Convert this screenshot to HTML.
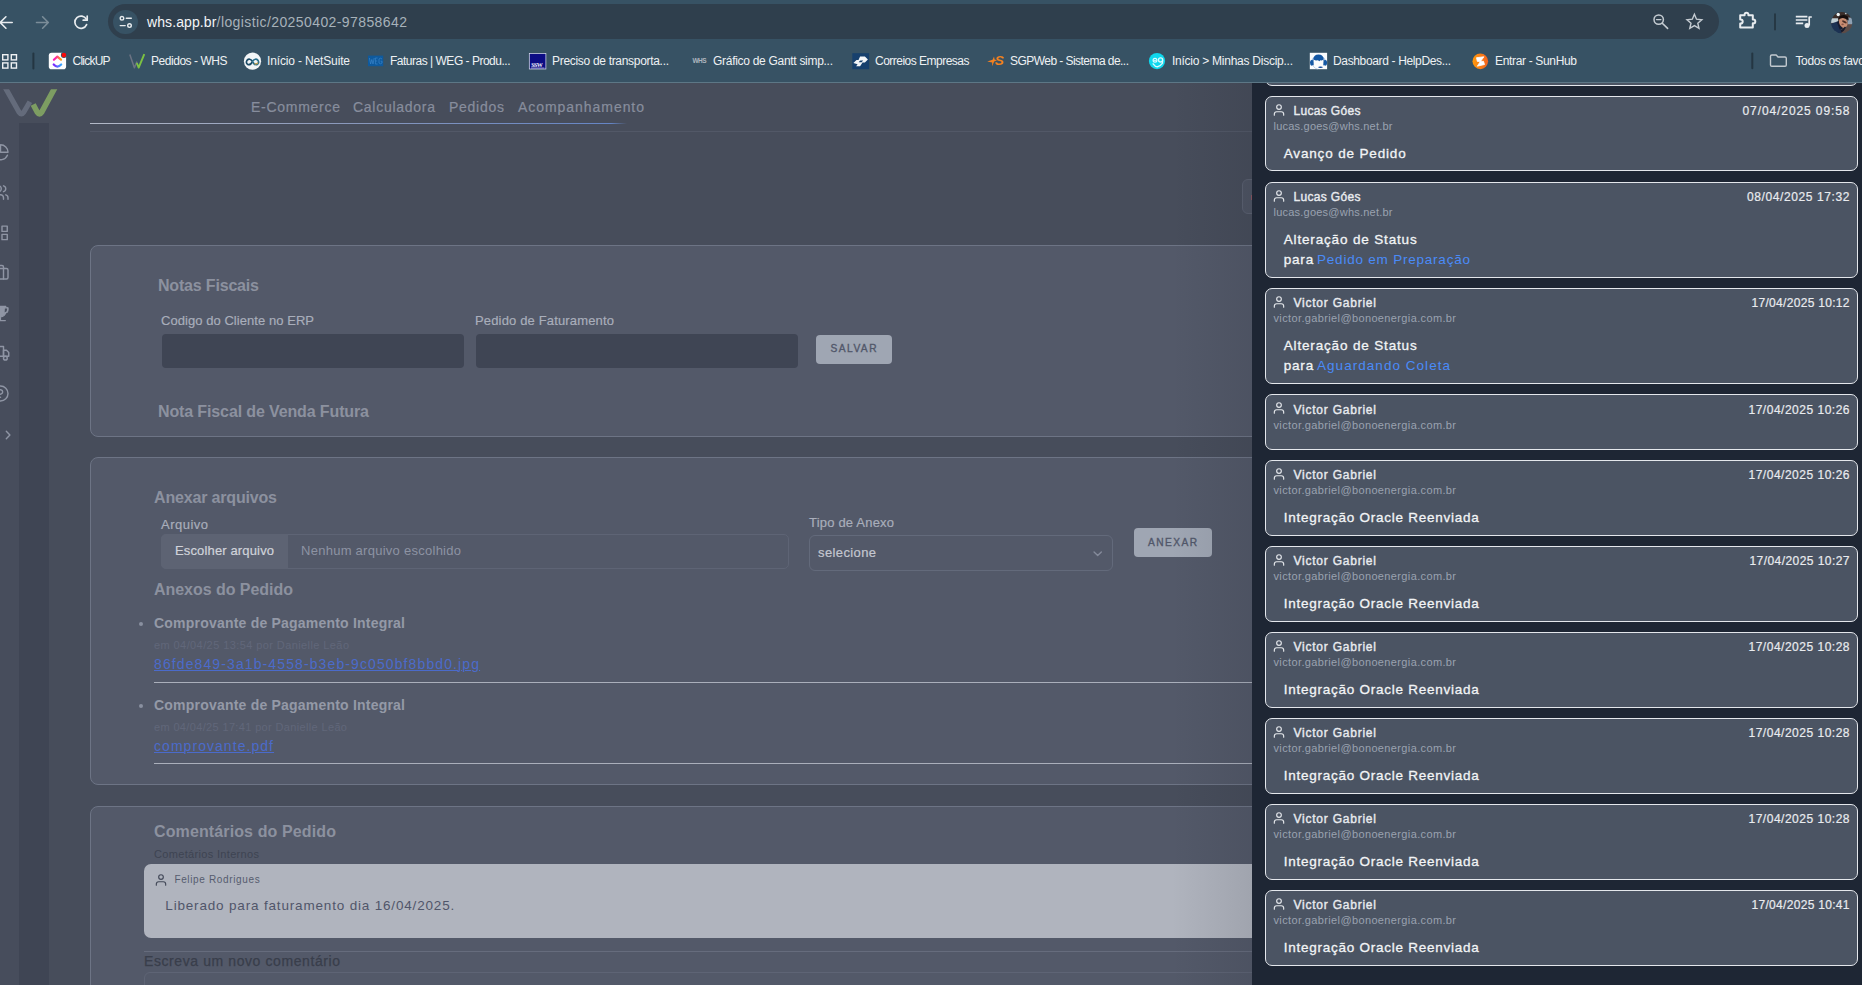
<!DOCTYPE html>
<html lang="pt-BR"><head><meta charset="utf-8"><title>WHS</title>
<style>
html,body{margin:0;padding:0}
body{width:1862px;height:985px;overflow:hidden;position:relative;background:#474d5b;font-family:"Liberation Sans",sans-serif;}
.t{position:absolute;white-space:pre;line-height:1;}
.a{position:absolute;}
.card{position:absolute;left:90px;width:1300px;background:#535969;border:1px solid #6d7485;border-radius:8px;box-sizing:border-box;}
.dc{position:absolute;left:1265px;width:593px;background:#4b5463;border:1px solid #e4e7ec;border-radius:7px;box-sizing:border-box;}
.btn{position:absolute;background:#9fa6b3;border-radius:4px;}
svg{position:absolute;overflow:visible}
</style></head><body>
<div class="a" style="left:0;top:83px;width:19px;height:902px;background:#474d5c"></div><div class="a" style="left:19px;top:123px;width:30px;height:862px;background:#3f4554"></div><div class="a" style="left:90px;top:131px;width:1162px;height:1px;background:#50566400;border-top:1px solid #525867"></div><div class="a" style="left:90px;top:123px;width:537px;height:1.4px;background:linear-gradient(90deg,#b3b9c7 0%,#8c9abb 45%,#6585c5 97%,rgba(102,134,198,0) 100%)"></div><svg class="a" style="left:0;top:83px" width="60" height="40" viewBox="0 83 60 40">
<defs><clipPath id="lc"><rect x="0" y="89.2" width="60" height="40"/></clipPath></defs>
<g clip-path="url(#lc)" fill="none" stroke-linejoin="round" stroke-linecap="butt">
<path d="M4.9 87 L19.1 112.3 Q21.4 115.6 23.7 112.3 L29.9 101.8" stroke="#646b7b" stroke-width="5.2"/>
<path d="M33.2 104.5 L37.3 112.2 Q39.5 115.6 41.7 112.2 L55.3 87" stroke="#7d9d62" stroke-width="5.6"/>
</g></svg><span class="t" style="top:99.55px;font-size:14px;color:#878d9d;letter-spacing:0.726px;left:251.00px;-webkit-text-stroke:0.2px #878d9d;">E-Commerce</span><span class="t" style="top:99.55px;font-size:14px;color:#878d9d;letter-spacing:0.728px;left:353.00px;-webkit-text-stroke:0.2px #878d9d;">Calculadora</span><span class="t" style="top:99.55px;font-size:14px;color:#878d9d;letter-spacing:0.734px;left:449.00px;-webkit-text-stroke:0.2px #878d9d;">Pedidos</span><span class="t" style="top:99.55px;font-size:14px;color:#878d9d;letter-spacing:0.951px;left:518.00px;-webkit-text-stroke:0.2px #878d9d;">Acompanhamento</span><svg class="a" style="left:0;top:83px" width="19" height="902" viewBox="0 83 19 902" fill="none" stroke="#8f95a4" stroke-linecap="round" stroke-linejoin="round"><g transform="translate(-8.5 143.3) scale(0.75)" stroke-width="1.9"><path d="M21.21 15.89A10 10 0 1 1 8 2.83"/><path d="M22 12A10 10 0 0 0 12 2v10z"/></g><g transform="translate(-8.5 183.5) scale(0.75)" stroke-width="1.9"><path d="M16 21v-2a4 4 0 0 0-4-4H6a4 4 0 0 0-4 4v2"/><circle cx="9" cy="7" r="4"/><path d="M22 21v-2a4 4 0 0 0-3-3.87"/><path d="M16 3.13a4 4 0 0 1 0 7.75"/></g><g transform="translate(-8.5 223.9) scale(0.75)" stroke-width="1.9"><rect x="14" y="3" width="7" height="7"/><rect x="14" y="14" width="7" height="7"/><rect x="3" y="3" width="7" height="7"/><rect x="3" y="14" width="7" height="7"/></g><g transform="translate(-8.5 263.3) scale(0.75)" stroke-width="1.9"><rect x="2" y="7" width="20" height="14" rx="2"/><path d="M16 21V5a2 2 0 0 0-2-2h-4a2 2 0 0 0-2 2v16"/></g><g transform="translate(-8.5 304.1) scale(0.75)" stroke-width="1.9"><path d="M5 3h14v7a7 7 0 0 1-14 0z M12 16v5 M6 22h12.5 M19 5h3v2.5a4 4 0 0 1-4 4" fill="#8f95a4" stroke-width="1.6"/><path d="M18 5h3.5v2.5a4 4 0 0 1-4 4" fill="#474d5c" stroke-width="1.5"/></g><g transform="translate(-8.5 344.3) scale(0.75)" stroke-width="1.9"><rect x="1" y="3" width="15" height="13"/><polygon points="16 8 20 8 23 11 23 16 16 16 16 8"/><circle cx="5.5" cy="18.5" r="2.5"/><circle cx="18.5" cy="18.5" r="2.5" fill="#474d5c"/></g><g transform="translate(-8.5 384.5) scale(0.75)" stroke-width="1.9"><circle cx="12" cy="12" r="10"/><path d="M9.09 9a3 3 0 0 1 5.83 1c0 2-3 3-3 3"/><path d="M12 17h.01"/></g><path d="M6.3 431.2 L9.9 435 L6.3 438.8" stroke-width="1.4"/></svg><div class="card" style="top:245px;height:192px"></div><span class="t" style="top:277.56px;font-size:16px;color:#8c919f;font-weight:700;letter-spacing:-0.180px;left:158.00px;">Notas Fiscais</span><span class="t" style="top:314.00px;font-size:13px;color:#a9aebb;letter-spacing:0.054px;left:161.00px;-webkit-text-stroke:0.18px #a9aebb;">Codigo do Cliente no ERP</span><span class="t" style="top:314.00px;font-size:13px;color:#a9aebb;letter-spacing:0.156px;left:475.00px;-webkit-text-stroke:0.18px #a9aebb;">Pedido de Faturamento</span><div class="a" style="left:162px;top:334px;width:302px;height:34px;background:#3f4554;border-radius:4px"></div><div class="a" style="left:476px;top:334px;width:322px;height:34px;background:#3f4554;border-radius:4px"></div><div class="btn" style="left:816px;top:335px;width:76px;height:29px"></div><span class="t" style="top:343.97px;font-size:10.2px;color:#51576a;letter-spacing:1.459px;left:830.50px;-webkit-text-stroke:0.35px #51576a;">SALVAR</span><span class="t" style="top:403.56px;font-size:16px;color:#8c919f;font-weight:700;letter-spacing:-0.126px;left:158.00px;">Nota Fiscal de Venda Futura</span><div class="card" style="top:457px;height:328px"></div><span class="t" style="top:489.56px;font-size:16px;color:#8c919f;font-weight:700;letter-spacing:-0.171px;left:154.00px;">Anexar arquivos</span><span class="t" style="top:518.00px;font-size:13px;color:#a9aebb;letter-spacing:0.487px;left:161.00px;-webkit-text-stroke:0.18px #a9aebb;">Arquivo</span><div class="a" style="left:161px;top:534px;width:628px;height:35px;border:1px solid #5e6475;border-radius:5px;box-sizing:border-box"></div><div class="a" style="left:161px;top:534px;width:127px;height:35px;background:#5d6373;border-radius:5px 0 0 5px"></div><span class="t" style="top:544.00px;font-size:13px;color:#d0d3da;letter-spacing:0.145px;left:175.00px;-webkit-text-stroke:0.2px #d0d3da;">Escolher arquivo</span><span class="t" style="top:544.00px;font-size:13px;color:#8d93a3;letter-spacing:0.264px;left:301.00px;">Nenhum arquivo escolhido</span><span class="t" style="top:515.60px;font-size:13px;color:#a9aebb;letter-spacing:0.197px;left:809.00px;-webkit-text-stroke:0.18px #a9aebb;">Tipo de Anexo</span><div class="a" style="left:809px;top:535px;width:304px;height:36px;border:1px solid #636a7b;border-radius:6px;box-sizing:border-box"></div><span class="t" style="top:546.00px;font-size:13px;color:#c4c7d0;letter-spacing:0.383px;left:818.00px;-webkit-text-stroke:0.2px #c4c7d0;">selecione</span><svg class="a" style="left:1092.6px;top:550.6px" width="9.4" height="6.4" viewBox="0 0 10 7" fill="none" stroke="#858b9b" stroke-width="1.5" stroke-linecap="round" stroke-linejoin="round"><path d="M1 1 L5 5 L9 1"/></svg><div class="btn" style="left:1134px;top:528px;width:78px;height:29px"></div><span class="t" style="top:537.97px;font-size:10.2px;color:#51576a;letter-spacing:1.419px;left:1148.00px;-webkit-text-stroke:0.35px #51576a;">ANEXAR</span><span class="t" style="top:581.56px;font-size:16px;color:#8c919f;font-weight:700;letter-spacing:-0.039px;left:154.00px;">Anexos do Pedido</span><div class="a" style="left:138.6px;top:622.2px;width:4px;height:4px;border-radius:50%;background:#8a90a0"></div><span class="t" style="top:616.15px;font-size:14px;color:#9499a7;font-weight:700;letter-spacing:0.210px;left:154.00px;">Comprovante de Pagamento Integral</span><span class="t" style="top:640.09px;font-size:11px;color:#61677a;letter-spacing:0.411px;left:154.00px;">em 04/04/25 13:54 por Danielle Leão</span><span class="t" style="top:656.75px;font-size:14px;color:#4b6bcb;letter-spacing:1.107px;left:154.00px;text-decoration:underline;text-decoration-thickness:1px;text-underline-offset:1.2px;">86fde849-3a1b-4558-b3eb-9c050bf8bbd0.jpg</span><div class="a" style="left:154px;top:682px;width:1098px;height:1px;background:#aaafbb"></div><div class="a" style="left:138.6px;top:704.0px;width:4px;height:4px;border-radius:50%;background:#8a90a0"></div><span class="t" style="top:697.95px;font-size:14px;color:#9499a7;font-weight:700;letter-spacing:0.210px;left:154.00px;">Comprovante de Pagamento Integral</span><span class="t" style="top:721.89px;font-size:11px;color:#61677a;letter-spacing:0.352px;left:154.00px;">em 04/04/25 17:41 por Danielle Leão</span><span class="t" style="top:738.55px;font-size:14px;color:#4b6bcb;letter-spacing:1.050px;left:154.00px;text-decoration:underline;text-decoration-thickness:1px;text-underline-offset:1.2px;">comprovante.pdf</span><div class="a" style="left:154px;top:763px;width:1098px;height:1px;background:#aaafbb"></div><div class="card" style="top:806px;height:300px"></div><span class="t" style="top:824.46px;font-size:16px;color:#8c919f;font-weight:700;letter-spacing:0.121px;left:154.00px;">Comentários do Pedido</span><span class="t" style="top:848.69px;font-size:11px;color:#3e4452;letter-spacing:0.331px;left:154.00px;">Cometários Internos</span><div class="a" style="left:144px;top:864px;width:1200px;height:74px;background:#b0b4be;border-radius:7px"></div><svg class="a" style="left:153.7px;top:872.8px" width="14" height="14" viewBox="0 0 24 24" fill="none" stroke="#434959" stroke-width="2" stroke-linecap="round" stroke-linejoin="round"><path d="M20 21v-2a4 4 0 0 0-4-4H8a4 4 0 0 0-4 4v2"/><circle cx="12" cy="7" r="4"/></svg><span class="t" style="top:875.43px;font-size:10px;color:#565c6e;letter-spacing:0.646px;left:174.40px;">Felipe Rodrigues</span><span class="t" style="top:899.37px;font-size:13.5px;color:#50566a;letter-spacing:0.826px;left:165.30px;">Liberado para faturamento dia 16/04/2025.</span><div class="a" style="left:144px;top:951px;width:1108px;height:1px;background:#666c7d"></div><span class="t" style="top:954.15px;font-size:14px;color:#393e4b;letter-spacing:0.588px;left:144.00px;-webkit-text-stroke:0.25px #393e4b;">Escreva um novo comentário</span><div class="a" style="left:144px;top:972px;width:1200px;height:40px;border:1px solid #5e6475;border-radius:6px;box-sizing:border-box"></div><div class="a" style="left:1242px;top:179px;width:30px;height:35px;background:#4e5463;border:1px solid #5b6171;border-radius:6px;box-sizing:border-box"></div><div class="a" style="left:1250.6px;top:195px;width:1.4px;height:5px;background:#8a5560"></div><div class="a" style="left:1172px;top:83px;width:80px;height:902px;background:linear-gradient(90deg,rgba(20,24,34,0),rgba(20,24,34,0.10))"></div><div class="a" style="left:1252px;top:83px;width:610px;height:902px;background:#1e2634"></div><div class="dc" style="top:10px;height:76px"></div><div class="dc" style="top:96px;height:75px"><svg class="a" style="left:6.45px;top:5.5px" width="14" height="14" viewBox="0 0 24 24" fill="none" stroke="#e3e6ea" stroke-width="2" stroke-linecap="round" stroke-linejoin="round"><path d="M20 21v-2a4 4 0 0 0-4-4H8a4 4 0 0 0-4 4v2"/><circle cx="12" cy="7" r="4"/></svg></div><span class="t" style="top:105.04px;font-size:12px;color:#e9ebef;letter-spacing:0.328px;left:1293.50px;-webkit-text-stroke:0.38px #e9ebef;">Lucas Góes</span><span class="t" style="top:121.29px;font-size:11px;color:#9aa2b0;letter-spacing:0.224px;left:1273.50px;">lucas.goes@whs.net.br</span><span class="t" style="top:105.04px;font-size:12px;color:#e9ebef;letter-spacing:0.905px;right:11.59px;-webkit-text-stroke:0.2px #e9ebef;">07/04/2025 09:58</span><span class="t" style="top:146.57px;font-size:13.5px;color:#f2f4f6;letter-spacing:0.844px;left:1283.70px;-webkit-text-stroke:0.3px #f2f4f6;">Avanço de Pedido</span><div class="dc" style="top:182px;height:96px"><svg class="a" style="left:6.45px;top:5.5px" width="14" height="14" viewBox="0 0 24 24" fill="none" stroke="#e3e6ea" stroke-width="2" stroke-linecap="round" stroke-linejoin="round"><path d="M20 21v-2a4 4 0 0 0-4-4H8a4 4 0 0 0-4 4v2"/><circle cx="12" cy="7" r="4"/></svg></div><span class="t" style="top:191.04px;font-size:12px;color:#e9ebef;letter-spacing:0.328px;left:1293.50px;-webkit-text-stroke:0.38px #e9ebef;">Lucas Góes</span><span class="t" style="top:207.29px;font-size:11px;color:#9aa2b0;letter-spacing:0.224px;left:1273.50px;">lucas.goes@whs.net.br</span><span class="t" style="top:191.04px;font-size:12px;color:#e9ebef;letter-spacing:0.605px;right:11.89px;-webkit-text-stroke:0.2px #e9ebef;">08/04/2025 17:32</span><span class="t" style="top:232.57px;font-size:13.5px;color:#f2f4f6;letter-spacing:0.843px;left:1283.70px;-webkit-text-stroke:0.3px #f2f4f6;">Alteração de Status</span><span class="t" style="top:252.57px;font-size:13.5px;color:#f2f4f6;letter-spacing:0.823px;left:1283.70px;-webkit-text-stroke:0.3px #f2f4f6;">para</span><span class="t" style="top:252.57px;font-size:13.5px;color:#4a8bf8;letter-spacing:0.785px;left:1317.00px;">Pedido em Preparação</span><div class="dc" style="top:288px;height:96px"><svg class="a" style="left:6.45px;top:5.5px" width="14" height="14" viewBox="0 0 24 24" fill="none" stroke="#e3e6ea" stroke-width="2" stroke-linecap="round" stroke-linejoin="round"><path d="M20 21v-2a4 4 0 0 0-4-4H8a4 4 0 0 0-4 4v2"/><circle cx="12" cy="7" r="4"/></svg></div><span class="t" style="top:297.04px;font-size:12px;color:#e9ebef;letter-spacing:0.770px;left:1293.50px;-webkit-text-stroke:0.38px #e9ebef;">Victor Gabriel</span><span class="t" style="top:313.29px;font-size:11px;color:#9aa2b0;letter-spacing:0.367px;left:1273.50px;">victor.gabriel@bonoenergia.com.br</span><span class="t" style="top:297.04px;font-size:12px;color:#e9ebef;letter-spacing:0.305px;right:12.19px;-webkit-text-stroke:0.2px #e9ebef;">17/04/2025 10:12</span><span class="t" style="top:338.57px;font-size:13.5px;color:#f2f4f6;letter-spacing:0.843px;left:1283.70px;-webkit-text-stroke:0.3px #f2f4f6;">Alteração de Status</span><span class="t" style="top:358.57px;font-size:13.5px;color:#f2f4f6;letter-spacing:0.823px;left:1283.70px;-webkit-text-stroke:0.3px #f2f4f6;">para</span><span class="t" style="top:358.57px;font-size:13.5px;color:#4a8bf8;letter-spacing:1.041px;left:1317.00px;">Aguardando Coleta</span><div class="dc" style="top:394px;height:56px"><svg class="a" style="left:6.45px;top:6.3px" width="14" height="14" viewBox="0 0 24 24" fill="none" stroke="#e3e6ea" stroke-width="2" stroke-linecap="round" stroke-linejoin="round"><path d="M20 21v-2a4 4 0 0 0-4-4H8a4 4 0 0 0-4 4v2"/><circle cx="12" cy="7" r="4"/></svg></div><span class="t" style="top:404.04px;font-size:12px;color:#e9ebef;letter-spacing:0.770px;left:1293.50px;-webkit-text-stroke:0.38px #e9ebef;">Victor Gabriel</span><span class="t" style="top:420.29px;font-size:11px;color:#9aa2b0;letter-spacing:0.367px;left:1273.50px;">victor.gabriel@bonoenergia.com.br</span><span class="t" style="top:404.04px;font-size:12px;color:#e9ebef;letter-spacing:0.505px;right:11.99px;-webkit-text-stroke:0.2px #e9ebef;">17/04/2025 10:26</span><div class="dc" style="top:460px;height:76px"><svg class="a" style="left:6.45px;top:5.5px" width="14" height="14" viewBox="0 0 24 24" fill="none" stroke="#e3e6ea" stroke-width="2" stroke-linecap="round" stroke-linejoin="round"><path d="M20 21v-2a4 4 0 0 0-4-4H8a4 4 0 0 0-4 4v2"/><circle cx="12" cy="7" r="4"/></svg></div><span class="t" style="top:469.04px;font-size:12px;color:#e9ebef;letter-spacing:0.770px;left:1293.50px;-webkit-text-stroke:0.38px #e9ebef;">Victor Gabriel</span><span class="t" style="top:485.29px;font-size:11px;color:#9aa2b0;letter-spacing:0.367px;left:1273.50px;">victor.gabriel@bonoenergia.com.br</span><span class="t" style="top:469.04px;font-size:12px;color:#e9ebef;letter-spacing:0.505px;right:11.99px;-webkit-text-stroke:0.2px #e9ebef;">17/04/2025 10:26</span><span class="t" style="top:510.57px;font-size:13.5px;color:#f2f4f6;letter-spacing:0.746px;left:1283.70px;-webkit-text-stroke:0.3px #f2f4f6;">Integração Oracle Reenviada</span><div class="dc" style="top:546px;height:76px"><svg class="a" style="left:6.45px;top:5.5px" width="14" height="14" viewBox="0 0 24 24" fill="none" stroke="#e3e6ea" stroke-width="2" stroke-linecap="round" stroke-linejoin="round"><path d="M20 21v-2a4 4 0 0 0-4-4H8a4 4 0 0 0-4 4v2"/><circle cx="12" cy="7" r="4"/></svg></div><span class="t" style="top:555.04px;font-size:12px;color:#e9ebef;letter-spacing:0.770px;left:1293.50px;-webkit-text-stroke:0.38px #e9ebef;">Victor Gabriel</span><span class="t" style="top:571.29px;font-size:11px;color:#9aa2b0;letter-spacing:0.367px;left:1273.50px;">victor.gabriel@bonoenergia.com.br</span><span class="t" style="top:555.04px;font-size:12px;color:#e9ebef;letter-spacing:0.439px;right:12.06px;-webkit-text-stroke:0.2px #e9ebef;">17/04/2025 10:27</span><span class="t" style="top:596.57px;font-size:13.5px;color:#f2f4f6;letter-spacing:0.746px;left:1283.70px;-webkit-text-stroke:0.3px #f2f4f6;">Integração Oracle Reenviada</span><div class="dc" style="top:632px;height:76px"><svg class="a" style="left:6.45px;top:5.5px" width="14" height="14" viewBox="0 0 24 24" fill="none" stroke="#e3e6ea" stroke-width="2" stroke-linecap="round" stroke-linejoin="round"><path d="M20 21v-2a4 4 0 0 0-4-4H8a4 4 0 0 0-4 4v2"/><circle cx="12" cy="7" r="4"/></svg></div><span class="t" style="top:641.04px;font-size:12px;color:#e9ebef;letter-spacing:0.770px;left:1293.50px;-webkit-text-stroke:0.38px #e9ebef;">Victor Gabriel</span><span class="t" style="top:657.29px;font-size:11px;color:#9aa2b0;letter-spacing:0.367px;left:1273.50px;">victor.gabriel@bonoenergia.com.br</span><span class="t" style="top:641.04px;font-size:12px;color:#e9ebef;letter-spacing:0.505px;right:11.99px;-webkit-text-stroke:0.2px #e9ebef;">17/04/2025 10:28</span><span class="t" style="top:682.57px;font-size:13.5px;color:#f2f4f6;letter-spacing:0.746px;left:1283.70px;-webkit-text-stroke:0.3px #f2f4f6;">Integração Oracle Reenviada</span><div class="dc" style="top:718px;height:76px"><svg class="a" style="left:6.45px;top:5.5px" width="14" height="14" viewBox="0 0 24 24" fill="none" stroke="#e3e6ea" stroke-width="2" stroke-linecap="round" stroke-linejoin="round"><path d="M20 21v-2a4 4 0 0 0-4-4H8a4 4 0 0 0-4 4v2"/><circle cx="12" cy="7" r="4"/></svg></div><span class="t" style="top:727.04px;font-size:12px;color:#e9ebef;letter-spacing:0.770px;left:1293.50px;-webkit-text-stroke:0.38px #e9ebef;">Victor Gabriel</span><span class="t" style="top:743.29px;font-size:11px;color:#9aa2b0;letter-spacing:0.367px;left:1273.50px;">victor.gabriel@bonoenergia.com.br</span><span class="t" style="top:727.04px;font-size:12px;color:#e9ebef;letter-spacing:0.505px;right:11.99px;-webkit-text-stroke:0.2px #e9ebef;">17/04/2025 10:28</span><span class="t" style="top:768.57px;font-size:13.5px;color:#f2f4f6;letter-spacing:0.746px;left:1283.70px;-webkit-text-stroke:0.3px #f2f4f6;">Integração Oracle Reenviada</span><div class="dc" style="top:804px;height:76px"><svg class="a" style="left:6.45px;top:5.5px" width="14" height="14" viewBox="0 0 24 24" fill="none" stroke="#e3e6ea" stroke-width="2" stroke-linecap="round" stroke-linejoin="round"><path d="M20 21v-2a4 4 0 0 0-4-4H8a4 4 0 0 0-4 4v2"/><circle cx="12" cy="7" r="4"/></svg></div><span class="t" style="top:813.04px;font-size:12px;color:#e9ebef;letter-spacing:0.770px;left:1293.50px;-webkit-text-stroke:0.38px #e9ebef;">Victor Gabriel</span><span class="t" style="top:829.29px;font-size:11px;color:#9aa2b0;letter-spacing:0.367px;left:1273.50px;">victor.gabriel@bonoenergia.com.br</span><span class="t" style="top:813.04px;font-size:12px;color:#e9ebef;letter-spacing:0.505px;right:11.99px;-webkit-text-stroke:0.2px #e9ebef;">17/04/2025 10:28</span><span class="t" style="top:854.57px;font-size:13.5px;color:#f2f4f6;letter-spacing:0.746px;left:1283.70px;-webkit-text-stroke:0.3px #f2f4f6;">Integração Oracle Reenviada</span><div class="dc" style="top:890px;height:76px"><svg class="a" style="left:6.45px;top:5.5px" width="14" height="14" viewBox="0 0 24 24" fill="none" stroke="#e3e6ea" stroke-width="2" stroke-linecap="round" stroke-linejoin="round"><path d="M20 21v-2a4 4 0 0 0-4-4H8a4 4 0 0 0-4 4v2"/><circle cx="12" cy="7" r="4"/></svg></div><span class="t" style="top:899.04px;font-size:12px;color:#e9ebef;letter-spacing:0.770px;left:1293.50px;-webkit-text-stroke:0.38px #e9ebef;">Victor Gabriel</span><span class="t" style="top:915.29px;font-size:11px;color:#9aa2b0;letter-spacing:0.367px;left:1273.50px;">victor.gabriel@bonoenergia.com.br</span><span class="t" style="top:899.04px;font-size:12px;color:#e9ebef;letter-spacing:0.305px;right:12.19px;-webkit-text-stroke:0.2px #e9ebef;">17/04/2025 10:41</span><span class="t" style="top:940.57px;font-size:13.5px;color:#f2f4f6;letter-spacing:0.746px;left:1283.70px;-webkit-text-stroke:0.3px #f2f4f6;">Integração Oracle Reenviada</span><div class="a" style="left:0;top:0;width:1862px;height:82px;background:#375264"></div><div class="a" style="left:0;top:82px;width:1862px;height:1px;background:#5d7786"></div><div class="a" style="left:108px;top:4px;width:1611px;height:35px;border-radius:17.5px;background:#2f3f4d"></div><div class="a" style="left:113.3px;top:9.5px;width:24.8px;height:24.8px;border-radius:50%;background:#375264"></div><svg class="a" style="left:0;top:0" width="1862" height="82" viewBox="0 0 1862 82" fill="none" stroke="#e8ecef" stroke-width="1.5" stroke-linecap="round" stroke-linejoin="round">
<path d="M12.2 22.5 H0.2 M5.9 16.8 L0.2 22.5 L5.9 28.2" stroke-width="1.6"/>
<path d="M36.5 22.5 H48.3 M42.6 16.8 L48.3 22.5 L42.6 28.2" stroke="#7b8d99" stroke-width="1.6"/>
<path d="M86.3 19.2 A6.1 6.1 0 1 0 86.6 24.6" stroke-width="1.7"/><path d="M87.2 16.2 V20.2 H83.2" stroke-width="1.7"/>
<circle cx="122" cy="18.3" r="1.8" stroke-width="1.4"/><path d="M126.3 18.3 H131.3" stroke-width="1.4"/><circle cx="129.5" cy="25.6" r="1.8" stroke-width="1.4"/><path d="M120.2 25.6 H125.2" stroke-width="1.4"/>
<g stroke="#c5ccd2"><circle cx="1658.7" cy="19.6" r="4.7" stroke-width="1.5"/><path d="M1662.3 23.2 L1667.6 28.4" stroke-width="1.6"/><path d="M1656.5 19.6 H1660.9" stroke-width="1.4"/>
<path d="M1694.4 14.3 L1696.5 19.2 L1701.8 19.7 L1697.8 23.2 L1699 28.4 L1694.4 25.6 L1689.8 28.4 L1691 23.2 L1687 19.7 L1692.3 19.2 Z" stroke-width="1.4" stroke-linejoin="miter"/></g>
<path d="M1740.2 15.2 H1744.6 V14.6 A1.9 1.9 0 0 1 1748.4 14.6 V15.2 H1752.8 V19.5 H1753.4 A1.9 1.9 0 0 1 1753.4 23.3 H1752.8 V27.6 H1740.2 V23.6 H1740.6 A2 2 0 0 0 1740.6 19.4 H1740.2 Z" stroke-width="2"/>
<path d="M1775 14.2 V29.6" stroke="#263844" stroke-width="2"/>
<path d="M1795.8 16.6 H1807.4 M1795.8 20 H1807.4 M1795.8 23.4 H1803.2" stroke-width="1.7" stroke-linecap="butt"/><path d="M1809.2 25.4 V17 H1811.8" stroke-width="1.7" stroke-linecap="butt"/><circle cx="1807" cy="25.4" r="2.5" fill="#e8ecef" stroke="none"/>
</svg><svg class="a" style="left:1830.8px;top:11.7px" width="21.4" height="21.4" viewBox="0 0 21.4 21.4"><defs><clipPath id="av"><circle cx="10.7" cy="10.7" r="10.6"/></clipPath><filter id="avb" x="-10%" y="-10%" width="120%" height="120%"><feGaussianBlur stdDeviation="0.55"/></filter></defs><g clip-path="url(#av)"><g filter="url(#avb)"><rect x="-2" y="-2" width="26" height="26" fill="#5c4b47"/><rect x="-2" y="-2" width="26" height="8.5" fill="#3b2d2b"/><rect x="-1" y="6.3" width="8" height="4.6" fill="#bfcfd5"/><rect x="16.6" y="5.6" width="6" height="6.6" fill="#8fa1b3"/><circle cx="7.2" cy="2.5" r="1.7" fill="#eef5f5"/><circle cx="14.8" cy="1.4" r="0.9" fill="#b9c4c8"/><path d="M-1 12 L6.4 9.4 L10.4 15 L10.6 23 L-1 23 Z" fill="#1f3052"/><path d="M5.8 9.8 L9.4 8.4 L11.8 16.8 L8.6 17.4 Z" fill="#131c30"/><ellipse cx="12.3" cy="10.6" rx="4.1" ry="5.3" transform="rotate(-24 12.3 10.6)" fill="#c88d72"/><ellipse cx="13.4" cy="9.9" rx="2.6" ry="0.9" transform="rotate(28 13.4 9.9)" fill="#4a2f28"/><ellipse cx="11.6" cy="12.4" rx="1.2" ry="0.8" fill="#8a5446"/><path d="M7.4 6.6 Q8.6 2.6 13.4 3 Q18.2 3.8 17.6 8.6 Q14.4 5.6 10.6 6.2 Q8.6 6.6 7.4 7.8 Z" fill="#15110f"/><path d="M9.8 18.4 Q12 17 14 14.4 L15 15.4 Q13 19 10.6 20.6 Z" fill="#141a2a"/></g></g></svg><span class="t" style="top:14.55px;font-size:14px;color:#f3f5f7;letter-spacing:0.091px;left:147.00px;">whs.app.br</span><span class="t" style="top:14.55px;font-size:14px;color:#a7b2ba;letter-spacing:0.407px;left:216.60px;">/logistic/20250402-97858642</span><svg class="a" style="left:0;top:42px" width="1862" height="40" viewBox="0 42 1862 40" fill="none" stroke="#eef1f3" stroke-width="1.4">
<rect x="2.7" y="54.7" width="5.2" height="5.2"/><rect x="11.3" y="54.7" width="5.2" height="5.2"/><rect x="2.7" y="62.9" width="5.2" height="5.2"/><rect x="11.3" y="62.9" width="5.2" height="5.2"/>
<path d="M33.4 53.6 V68.4" stroke="#243642" stroke-width="2" stroke-linecap="round"/>
<path d="M1752.3 53.4 V68.2" stroke="#243642" stroke-width="2" stroke-linecap="round"/>
<path d="M1770.5 56.3 A1.3 1.3 0 0 1 1771.8 55 H1776.2 L1778 57 H1785 A1.3 1.3 0 0 1 1786.3 58.3 V65 A1.3 1.3 0 0 1 1785 66.3 H1771.8 A1.3 1.3 0 0 1 1770.5 65 Z" stroke="#c2c9cf" stroke-width="1.4" stroke-linejoin="round"/>
</svg><span class="t" style="top:55.04px;font-size:12px;color:#eef1f3;letter-spacing:-0.779px;left:72.60px;">ClickUP</span><span class="t" style="top:55.04px;font-size:12px;color:#eef1f3;letter-spacing:-0.461px;left:151.00px;">Pedidos - WHS</span><span class="t" style="top:55.04px;font-size:12px;color:#eef1f3;letter-spacing:-0.148px;left:267.00px;">Início - NetSuite</span><span class="t" style="top:55.04px;font-size:12px;color:#eef1f3;letter-spacing:-0.493px;left:390.00px;">Faturas | WEG - Produ...</span><span class="t" style="top:55.04px;font-size:12px;color:#eef1f3;letter-spacing:-0.307px;left:552.00px;">Preciso de transporta...</span><span class="t" style="top:55.04px;font-size:12px;color:#eef1f3;letter-spacing:-0.292px;left:713.00px;">Gráfico de Gantt simp...</span><span class="t" style="top:55.04px;font-size:12px;color:#eef1f3;letter-spacing:-0.513px;left:875.00px;">Correios Empresas</span><span class="t" style="top:55.04px;font-size:12px;color:#eef1f3;letter-spacing:-0.548px;left:1010.00px;">SGPWeb - Sistema de...</span><span class="t" style="top:55.04px;font-size:12px;color:#eef1f3;letter-spacing:-0.253px;left:1172.00px;">Início &gt; Minhas Discip...</span><span class="t" style="top:55.04px;font-size:12px;color:#eef1f3;letter-spacing:-0.352px;left:1333.00px;">Dashboard - HelpDes...</span><span class="t" style="top:55.04px;font-size:12px;color:#eef1f3;letter-spacing:-0.337px;left:1495.00px;">Entrar - SunHub</span><span class="t" style="top:55.04px;font-size:12px;color:#eef1f3;letter-spacing:-0.395px;left:1795.50px;">Todos os favoritos</span><svg class="a" style="left:0;top:42px" width="1862" height="40" viewBox="0 42 1862 40">
<defs><linearGradient id="cu1" x1="0" x2="1"><stop offset="0" stop-color="#ff10c0"/><stop offset="0.5" stop-color="#ff4a7a"/><stop offset="1" stop-color="#ffa010"/></linearGradient><linearGradient id="cu2" x1="0" x2="1"><stop offset="0" stop-color="#7b22ff"/><stop offset="1" stop-color="#38a8ff"/></linearGradient></defs>
<rect x="48.8" y="52.8" width="17.3" height="16.4" rx="2.8" fill="#fdfdfe"/>
<path d="M53.9 59.7 L57.35 56.6 L61 59.7" fill="none" stroke="url(#cu1)" stroke-width="2.2" stroke-linecap="round" stroke-linejoin="round"/>
<path d="M53.7 64.5 Q57.4 68.6 61.2 64.5" fill="none" stroke="url(#cu2)" stroke-width="2.2" stroke-linecap="round"/>
<circle cx="63.9" cy="55.1" r="3" fill="#375264"/><circle cx="63.9" cy="55.1" r="2.3" fill="#fb0a0a"/>
<path d="M129.8 54.6 L134.4 67.8 L137 61.6" fill="none" stroke="#6c7383" stroke-width="1.5" stroke-linejoin="round"/>
<path d="M136.8 63 L138.7 67.6 L144.3 54.2" fill="none" stroke="#7cc242" stroke-width="1.9" stroke-linejoin="round"/>
<circle cx="252.5" cy="61.2" r="8.6" fill="#f2f5f7"/><path d="M252.5 61.3 Q249.6 57.6 247 60.4 Q245.4 63 248 64.6 Q250.6 65.4 252.5 61.3" fill="none" stroke="#1c4b66" stroke-width="1.7"/><path d="M252.5 61.3 Q255.4 57.6 258 60.4 Q259.6 63 257 64.6 Q254.4 65.4 252.5 61.3" fill="none" stroke="#2a6f8c" stroke-width="1.7"/><path d="M254.5 63.6 Q256.6 64.6 258 62.6" fill="none" stroke="#c8a04a" stroke-width="1.2"/>
<rect x="368" y="55.6" width="15.2" height="10.6" fill="#0e5a9e"/><path d="M369.4 58 L370.6 64 L371.8 59.5 L373 64 L374.2 58 M375.4 58 V64 H377.6 M375.4 61 H377.2 M375.4 58 H377.6 M382 59 Q380.4 57.4 379 59 V63 Q380.4 64.6 382 63 V61.2 H380.6" fill="none" stroke="#3a84c8" stroke-width="0.7"/>
<rect x="529.3" y="53.6" width="16.6" height="15.4" fill="#0c0c84" stroke="#dfe2f2" stroke-width="0.7"/><path d="M531 68 H544.4" stroke="#e8e9f6" stroke-width="0.6"/>
<rect x="852.3" y="53.2" width="16.8" height="16" fill="#17406d"/><path d="M860.1 56.4 H864.9 L867.9 59.5 L864.9 62.6 H861.4 L863.2 60.4 H858.3 Z" fill="#f4f6f8"/><path d="M853.4 63.1 L856.5 60 H860.5 L858.7 62.2 H862.7 L860.1 66.2 H856.1 L857.6 64.2 Z" fill="#f4f6f8"/>
<path d="M987.2 61.4 L992.6 59.8 L994 56.6 L994.6 59.6 L997 60.2 L994.2 61.6 L992 66.2 L992.2 62.4 Z" fill="#f58220"/>
<circle cx="1157" cy="61.1" r="8.1" fill="#0fd8ee"/><circle cx="1155" cy="60.2" r="1.9" fill="none" stroke="#dbfbff" stroke-width="1.2"/><path d="M1153.4 60.4 H1156.4" stroke="#dbfbff" stroke-width="0.9"/><circle cx="1160.6" cy="59.9" r="2.1" fill="none" stroke="#dbfbff" stroke-width="1.3"/><path d="M1153.1 63.8 Q1157.4 70 1162.5 63.2 V60" fill="none" stroke="#dbfbff" stroke-width="1.3" stroke-linecap="round"/>
<g transform="translate(1309.8 52.8)"><rect x="0" y="0" width="17.3" height="16.4" fill="#fbfcfd"/><path d="M1.9 9.6 A6.8 6.8 0 0 1 15.7 9.6" fill="none" stroke="#8db0dc" stroke-width="0.9"/><path d="M3.3 6.8 Q4 1.8 8.7 1.7 Q13.4 1.8 14.1 6.8 L11.8 7.7 L10.6 7.4 L9.5 8.5 L8.2 7.5 L6.1 7.8 Z" fill="#1558a4"/><ellipse cx="1.9" cy="10" rx="1.7" ry="2.9" fill="#1558a4"/><ellipse cx="15.6" cy="10" rx="1.7" ry="2.9" fill="#1558a4"/><path d="M3.2 7 Q2.6 9 3.4 12.6 M14.2 7 Q14.8 9 14 12.6" stroke="#1558a4" stroke-width="1.2" fill="none"/><ellipse cx="10.7" cy="14.4" rx="2.3" ry="0.8" fill="#0c469a"/><path d="M3.4 13.2 Q5 16 8 16.4" fill="none" stroke="#9fbbe0" stroke-width="0.6"/></g>
<defs><linearGradient id="sh" x1="0" x2="1"><stop offset="0" stop-color="#ff9a0c"/><stop offset="1" stop-color="#f3621f"/></linearGradient></defs>
<circle cx="1480.3" cy="61.35" r="7.8" fill="url(#sh)"/><path d="M1476.5 57.7 L1483.9 56.8 L1480.5 61.5 L1483.5 61.3 L1484.5 64.5 L1477.3 66.2 L1480.3 61.5 L1477.3 61.4 Z" fill="#fdfdff" stroke="#fdfdff" stroke-width="0.8" stroke-linejoin="round"/>
</svg><span class="t" style="top:58.10px;font-size:6.5px;color:#aeb6bf;font-weight:700;letter-spacing:-0.586px;left:692.50px;">WHS</span><span class="t" style="top:55.24px;font-size:12px;color:#f58220;font-weight:700;left:995.20px;font-style:italic;transform:scaleX(1.15);transform-origin:0 0;">S</span><span class="t" style="top:62.22px;font-size:6px;color:#f2f3fb;font-weight:700;letter-spacing:-0.586px;left:531.30px;font-family:'Liberation Serif',serif;">SSW</span></body></html>
